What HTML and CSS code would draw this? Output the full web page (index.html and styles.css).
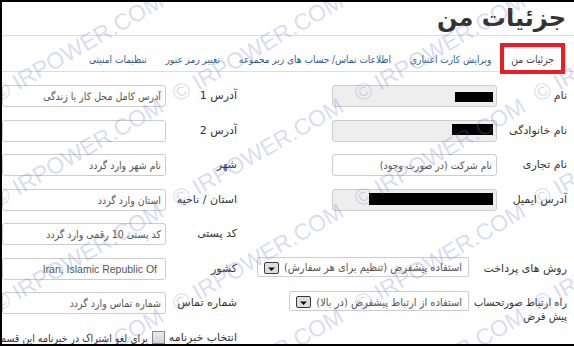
FILE: index.html
```html
<!DOCTYPE html>
<html lang="fa" dir="rtl">
<head>
<meta charset="utf-8">
<title>جزئیات من</title>
<link rel="stylesheet" href="styles.css">
</head>
<body>
<div class="frame">
  <h1 class="title">جزئیات من</h1>
  <ul class="tabs">
    <li class="tab active">جزئیات من</li>
    <li class="tab">ویرایش کارت اعتباری</li>
    <li class="tab">اطلاعات تماس/ حساب های زیر مجموعه</li>
    <li class="tab">تغییر رمز عبور</li>
    <li class="tab">تنظیمات امنیتی</li>
  </ul>
  <div class="form">
    <div class="col col-right">
      <label class="lbl">نام</label>
      <div class="field readonly"><span class="redact redact-a"></span></div>
      <label class="lbl">نام خانوادگی</label>
      <div class="field readonly"><span class="redact redact-b"></span></div>
      <label class="lbl">نام تجاری</label>
      <div class="field">نام شرکت (در صورت وجود)</div>
      <label class="lbl">آدرس ایمیل</label>
      <div class="field readonly"><span class="redact redact-c"></span></div>
      <div class="spacer"></div>
      <div class="wide-row">
        <label class="lbl wide-lbl">روش های پرداخت</label>
        <div class="select">
          <span class="select-text">استفاده پیشفرض (تنظیم برای هر سفارش)</span>
          <svg class="select-btn" width="15" height="12" viewBox="0 0 15 12"><rect x="0.5" y="0.5" width="14" height="11" rx="1.5" fill="#dedede" stroke="#3a3a3a"/><path d="M4 5.5h7l-3.5 3.5z" fill="#111"/></svg>
        </div>
      </div>
      <div class="wide-row">
        <label class="lbl wide-lbl narrow">راه ارتباط صورتحساب<br>پیش فرض</label>
        <div class="select">
          <span class="select-text">استفاده از ارتباط پیشفرض (در بالا)</span>
          <svg class="select-btn" width="15" height="12" viewBox="0 0 15 12"><rect x="0.5" y="0.5" width="14" height="11" rx="1.5" fill="#dedede" stroke="#3a3a3a"/><path d="M4 5.5h7l-3.5 3.5z" fill="#111"/></svg>
        </div>
      </div>
    </div>
    <div class="col col-left">
      <label class="lbl">آدرس 1</label>
      <div class="field">آدرس کامل محل کار یا زندگی</div>
      <label class="lbl">آدرس 2</label>
      <div class="field"></div>
      <label class="lbl">شهر</label>
      <div class="field">نام شهر وارد گردد</div>
      <label class="lbl">استان / ناحیه</label>
      <div class="field">استان وارد گردد</div>
      <label class="lbl">کد پستی</label>
      <div class="field">کد پستی 10 رقمی وارد گردد</div>
      <label class="lbl">کشور</label>
      <div class="field field-country"><span class="ltr">Iran, Islamic Republic Of</span></div>
      <label class="lbl">شماره تماس</label>
      <div class="field">شماره تماس وارد گردد</div>
      <label class="lbl">انتخاب خبرنامه</label>
      <div class="check-cell"><span class="checkbox"></span><span class="check-text">برای لغو اشتراک در خبرنامه این قسمت را علامت بزنید</span></div>
    </div>
  </div>
  <div class="watermarks">
    <div class="wm-row"><span>© IRPOWER.COM</span><span>© IRPOWER.COM</span><span>© IRPOWER.COM</span><span>© IRPOWER.COM</span></div>
    <div class="wm-row"><span>© IRPOWER.COM</span><span>© IRPOWER.COM</span><span>© IRPOWER.COM</span><span>© IRPOWER.COM</span></div>
    <div class="wm-row"><span>© IRPOWER.COM</span><span>© IRPOWER.COM</span><span>© IRPOWER.COM</span><span>© IRPOWER.COM</span></div>
    <div class="wm-row"><span>© IRPOWER.COM</span><span>© IRPOWER.COM</span><span>© IRPOWER.COM</span><span>© IRPOWER.COM</span></div>
  </div>
</div>
</body>
</html>
```
FILE: styles.css
```css
* { box-sizing: border-box; }
html, body { margin: 0; padding: 0; background: #fff; }
body {
  font-family: "DejaVu Sans", "Liberation Sans", sans-serif;
  font-size: 11px;
  color: #333;
}
.frame {
  position: relative;
  width: 574px;
  height: 346px;
  border-top: 2px solid #000;
  border-left: 2px solid #000;
  border-bottom: 2px solid #000;
  overflow: hidden;
  direction: rtl;
  background: #fff;
}
.title {
  margin: 0;
  height: 34px;
  padding: 2px 8px 0 0;
  font-size: 24px;
  line-height: 28px;
  font-weight: bold;
  color: #333;
  border-bottom: 1px solid #ddd;
}
.tabs {
  display: flex;
  align-items: flex-end;
  height: 36px;
  margin: 0;
  padding: 0 9px 0 0;
  list-style: none;
  border-bottom: 1px solid #ddd;
}
.tab {
  position: relative;
  height: 29px;
  margin: 0 0 -1px 1px;
  padding: 0 8px;
  line-height: 31px;
  font-family: "DejaVu Sans Condensed", "DejaVu Sans", sans-serif;
  font-stretch: condensed;
  font-size: 10px;
  color: #2d5b8e;
  white-space: nowrap;
  border: 1px solid transparent;
}
.tab.active {
  margin-left: 0;
  padding: 0 10px;
  font-size: 10.3px;
  color: #3a3a3a;
  background: #fff;
  border-color: #ddd #ddd transparent #ddd;
}
.tab.active::after {
  content: "";
  position: absolute;
  top: -1px;
  right: -1px;
  left: -1px;
  bottom: -3px;
  border: 4px solid #ed1c24;
}
.form {
  display: flex;
  gap: 95px;
  padding: 13px 7px 0 0;
}
.col {
  display: grid;
  grid-template-columns: 70px 165px;
  grid-auto-rows: 22px;
  row-gap: 12.5px;
  flex: none;
}
.col-left { grid-template-columns: 71px 164px; }
.lbl {
  align-self: start;
  padding-top: 4px;
  line-height: 14px;
  color: #333;
  white-space: nowrap;
}
.field {
  height: 22px;
  padding: 0 4px;
  line-height: 20px;
  font-family: "DejaVu Sans Condensed", "DejaVu Sans", sans-serif;
  font-stretch: condensed;
  font-size: 10.5px;
  border: 1px solid #ccc;
  border-radius: 3px;
  background: #fff;
  color: #555;
  white-space: nowrap;
  overflow: hidden;
}
.field.readonly { background: #eee; }
.field-country {
  padding-right: 8px;
  font-family: "Liberation Sans", sans-serif;
  font-stretch: normal;
  font-size: 10.5px;
  color: #555;
}
.ltr { direction: ltr; unicode-bidi: isolate; }
.redact {
  display: block;
  float: right;
  margin: 6px -1px 0 0;
  height: 10px;
  background: #000;
}
.redact-a { width: 38px; }
.redact-b { width: 41px; margin-top: 3px; height: 11px; }
.redact-c { width: 124px; margin-top: 3px; height: 12px; }
.spacer { grid-column: 1 / -1; }
.wide-row {
  grid-column: 1 / -1;
  display: flex;
  align-items: flex-start;
}
.wide-lbl {
  width: 98px;
  flex: none;
}
.wide-lbl.narrow {
  font-family: "DejaVu Sans Condensed", "DejaVu Sans", sans-serif;
  font-stretch: condensed;
}
.select {
  display: flex;
  align-items: center;
  gap: 5px;
  height: 20px;
  margin-top: -1px;
  padding: 2px 6px 0 6px;
  border: 1px solid #ccc;
  border-radius: 2px;
  background: #fff;
  color: #555;
  white-space: nowrap;
  font-family: "DejaVu Sans Condensed", "DejaVu Sans", sans-serif;
  font-stretch: condensed;
  font-size: 11px;
}
.select-btn { flex: none; display: block; }
.check-cell {
  display: flex;
  align-items: center;
  gap: 4px;
  padding-right: 1px;
  white-space: nowrap;
  overflow: hidden;
  color: #333;
  font-family: "DejaVu Sans Condensed", "DejaVu Sans", sans-serif;
  font-stretch: condensed;
  font-size: 10.5px;
}
.checkbox {
  flex: none;
  width: 13px;
  height: 13px;
  border: 1px solid #8a8a8a;
  background: linear-gradient(#eaeaea, #d4d4d4);
}
.watermarks {
  position: absolute;
  inset: 0;
  pointer-events: none;
  direction: ltr;
}
.wm-row {
  position: absolute;
  left: 0;
  width: 100%;
  height: 0;
}
.wm-row:nth-child(1) { top: 104px; }
.wm-row:nth-child(2) { top: 209px; }
.wm-row:nth-child(3) { top: 314px; }
.wm-row:nth-child(4) { top: 419px; }
.wm-row span {
  position: absolute;
  bottom: 0;
  font-family: "Liberation Sans", sans-serif;
  font-size: 23px;
  line-height: 23px;
  white-space: nowrap;
  color: rgba(110, 110, 200, 0.26);
  transform-origin: 0 100%;
  transform: rotate(-30deg);
}
.wm-row span:nth-child(1) { left: -2px; }
.wm-row span:nth-child(2) { left: 178px; }
.wm-row span:nth-child(3) { left: 360px; }
.wm-row span:nth-child(4) { left: 539px; }
```
